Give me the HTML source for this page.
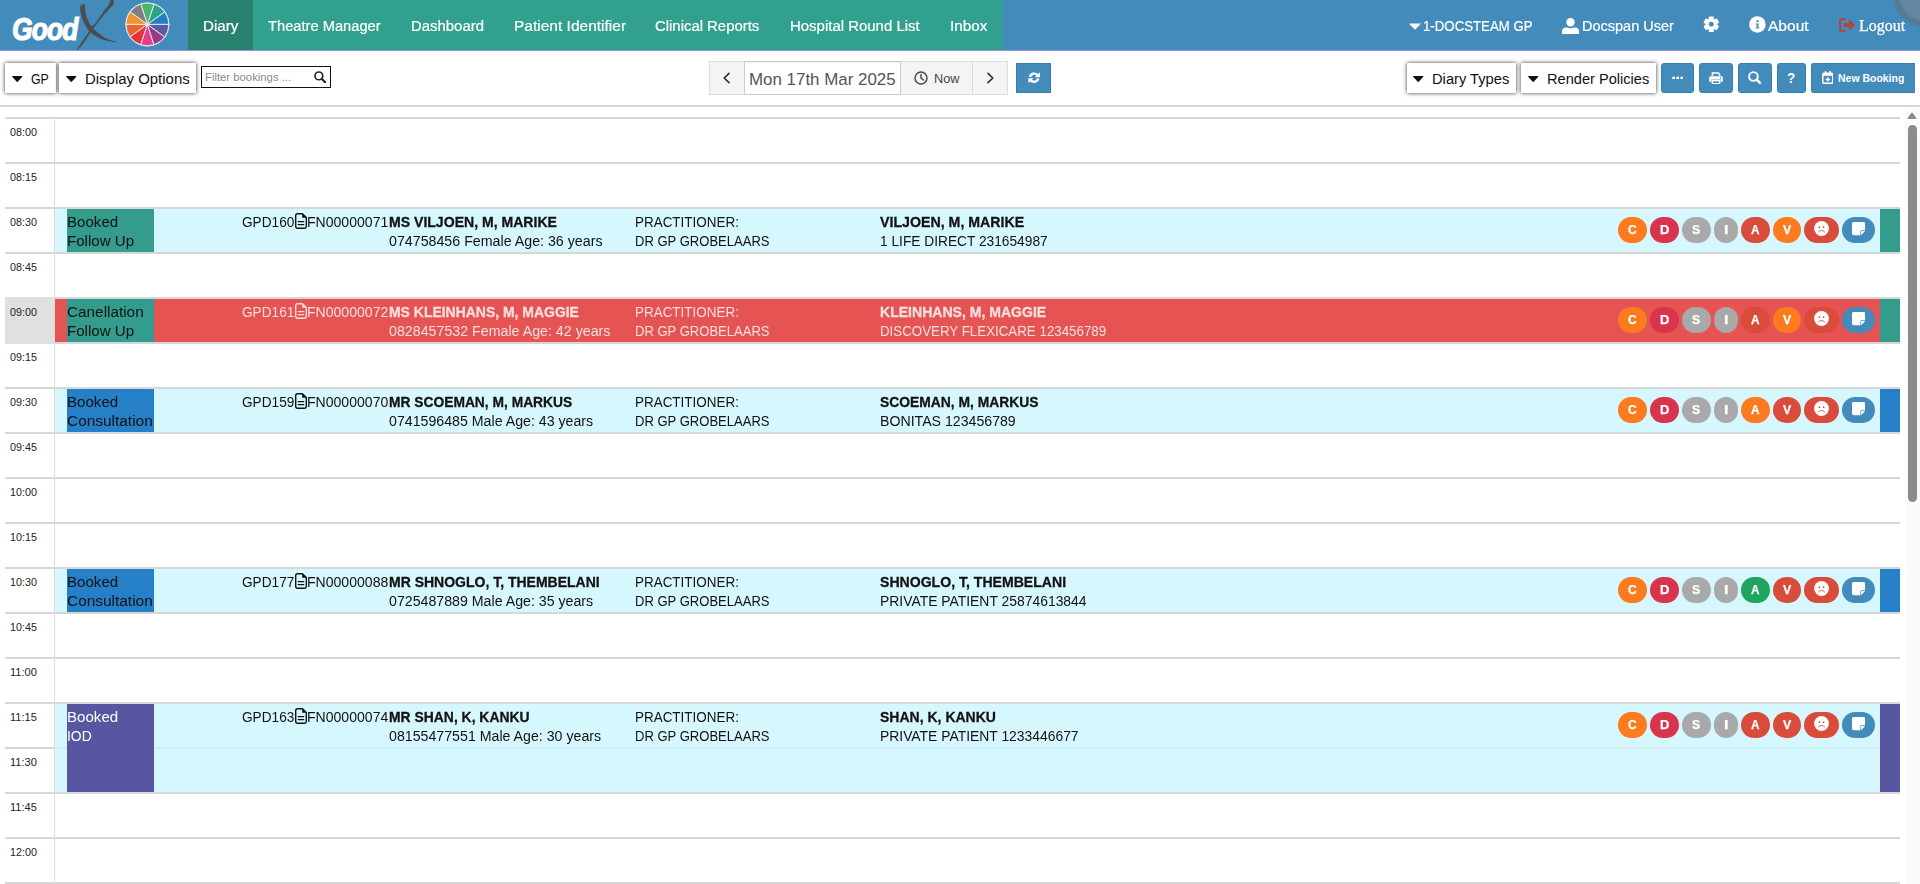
<!DOCTYPE html>
<html lang="en"><head><meta charset="utf-8"><title>GoodX Diary</title>
<style>
html,body{margin:0;padding:0}
body{width:1920px;height:884px;overflow:hidden;position:relative;background:#fff;font-family:"Liberation Sans",sans-serif;color:#222}
#pg{position:absolute;left:0;top:0;width:1920px;height:884px;overflow:hidden}
#pg div,#pg svg,#pg span,#gs span{position:absolute}
#gs{position:absolute;left:0;top:0;width:1920px;height:884px;overflow:hidden;will-change:transform}
#pg span.t,#gs span.t{white-space:pre;line-height:20px;transform-origin:0 0;display:block}
</style></head><body><div id="pg">
<div style="left:0px;top:0px;width:1920px;height:50px;background:#428bba;"></div>
<div style="left:0px;top:50px;width:1920px;height:1px;background:#9d92dc;"></div>
<div style="left:188px;top:0px;width:814px;height:50px;background:#31a08e;"></div>
<div style="left:188px;top:0px;width:65px;height:50px;background:#28806f;"></div>
<div style="left:1891px;top:-41px;width:70px;height:70px;border-radius:50%;background:radial-gradient(circle closest-side,rgba(134,134,134,.5) 0,rgba(134,134,134,.5) 72%,rgba(104,104,104,.52) 84%,rgba(100,100,100,.3) 92%,rgba(100,100,100,0) 100%)"></div>
<svg style="left:70px;top:0" width="60" height="51" viewBox="70 0 60 51"><path d="M80.30 6.50 C80.03 7.70 80.22 9.65 80.60 11.80 C80.98 13.95 81.72 17.05 82.60 19.40 C83.48 21.75 84.77 23.93 85.90 25.90 C87.03 27.87 87.83 29.53 89.40 31.20 C90.97 32.87 93.13 34.53 95.30 35.90 C97.47 37.27 99.95 38.52 102.40 39.40 C104.85 40.28 108.17 40.75 110.00 41.20 C111.83 41.65 112.50 41.93 113.40 42.10 C114.30 42.27 115.05 42.33 115.40 42.20 C115.75 42.07 115.92 41.52 115.50 41.30 C115.08 41.08 114.32 41.32 112.90 40.90 C111.48 40.48 108.95 39.73 107.00 38.80 C105.05 37.87 103.15 36.67 101.20 35.30 C99.25 33.93 96.97 32.17 95.30 30.60 C93.63 29.03 92.48 27.77 91.20 25.90 C89.92 24.03 88.58 21.75 87.60 19.40 C86.62 17.05 85.77 14.27 85.30 11.80 C84.83 9.33 85.32 5.80 84.80 4.60 C84.28 3.40 82.95 4.28 82.20 4.60 C81.45 4.92 80.57 5.30 80.30 6.50Z" fill="#4d4d4f"/><path d="M113.90 -1.00 C114.22 -0.05 113.85 3.17 113.20 4.70 C112.55 6.23 111.42 6.63 110.00 8.20 C108.58 9.77 106.77 11.65 104.70 14.10 C102.63 16.55 99.75 20.15 97.60 22.90 C95.45 25.65 93.65 27.95 91.80 30.60 C89.95 33.25 88.07 36.45 86.50 38.80 C84.93 41.15 83.88 42.87 82.40 44.70 C80.92 46.53 78.53 49.02 77.60 49.80 C76.67 50.58 76.40 50.25 76.80 49.40 C77.20 48.55 78.68 46.67 80.00 44.70 C81.32 42.73 82.93 40.15 84.70 37.60 C86.47 35.05 88.63 32.03 90.60 29.40 C92.57 26.77 94.35 24.73 96.50 21.80 C98.65 18.87 101.55 14.55 103.50 11.80 C105.45 9.05 106.90 7.43 108.20 5.30 C109.50 3.17 110.35 0.05 111.30 -1.00 C112.25 -2.05 113.58 -1.95 113.90 -1.00Z" fill="#4d4d4f"/></svg>
<span style="left:81.4px;top:17.7px;width:20px;height:24px;line-height:24px;font-size:12px;text-align:center;color:#4d4d4f;transform:scaleX(.84);transform-origin:50% 50%">X</span>
<svg style="left:124.29999999999998px;top:1.1000000000000014px" width="46.8" height="46.8" viewBox="-23.4 -23.4 46.8 46.8"><circle r="22.0" fill="#e9eef5"/><path d="M0 0 L21.40 -0.00 A21.4 21.4 0 0 0 17.31 -12.58 Z" fill="#2080c6" stroke="#e9eef5" stroke-width="0.9"/><path d="M0 0 L17.31 -12.58 A21.4 21.4 0 0 0 6.61 -20.35 Z" fill="#2fa08c" stroke="#e9eef5" stroke-width="0.9"/><path d="M0 0 L6.61 -20.35 A21.4 21.4 0 0 0 -6.61 -20.35 Z" fill="#4cb56d" stroke="#e9eef5" stroke-width="0.9"/><path d="M0 0 L-6.61 -20.35 A21.4 21.4 0 0 0 -17.31 -12.58 Z" fill="#7f7f7f" stroke="#e9eef5" stroke-width="0.9"/><path d="M0 0 L-17.31 -12.58 A21.4 21.4 0 0 0 -21.40 -0.00 Z" fill="#ef9232" stroke="#e9eef5" stroke-width="0.9"/><path d="M0 0 L-21.40 -0.00 A21.4 21.4 0 0 0 -17.31 12.58 Z" fill="#ee642c" stroke="#e9eef5" stroke-width="0.9"/><path d="M0 0 L-17.31 12.58 A21.4 21.4 0 0 0 -6.61 20.35 Z" fill="#e1373c" stroke="#e9eef5" stroke-width="0.9"/><path d="M0 0 L-6.61 20.35 A21.4 21.4 0 0 0 6.61 20.35 Z" fill="#e5408f" stroke="#e9eef5" stroke-width="0.9"/><path d="M0 0 L6.61 20.35 A21.4 21.4 0 0 0 17.31 12.58 Z" fill="#9b3a84" stroke="#e9eef5" stroke-width="0.9"/><path d="M0 0 L17.31 12.58 A21.4 21.4 0 0 0 21.40 0.00 Z" fill="#5a5aa6" stroke="#e9eef5" stroke-width="0.9"/><circle r="1.6" fill="#dfeaf2"/></svg>
<svg style="left:1409px;top:23px" width="12" height="7" viewBox="0 0 12 7"><path d="M0.6 0.4 H11.4 Q12 0.6 11.4 1.2 L6.5 6.3 Q6 6.8 5.5 6.3 L0.6 1.2 Q0 .6 .6 .4Z" fill="#fff"/></svg>
<svg style="left:1562px;top:17.5px" width="17" height="16" viewBox="0 0 17 16"><circle cx="8.5" cy="4.2" r="4.2" fill="#fff"/><path d="M0 16 V13.4 Q0 9.6 4 9.4 H5 Q8.5 11 12 9.4 H13 Q17 9.6 17 13.4 V16 Z" fill="#fff"/></svg>
<svg style="left:1702.95px;top:16.3px" width="16.6" height="16.6" viewBox="-8.3 -8.3 16.6 16.6"><path d="M1.85 4.92 L1.81 7.07 L-1.81 7.07 L-1.85 4.92 L-3.33 4.06 L-5.22 5.10 L-7.03 1.97 L-5.19 0.86 L-5.19 -0.86 L-7.03 -1.97 L-5.22 -5.10 L-3.33 -4.06 L-1.85 -4.92 L-1.81 -7.07 L1.81 -7.07 L1.85 -4.92 L3.33 -4.06 L5.22 -5.10 L7.03 -1.97 L5.19 -0.86 L5.19 0.86 L7.03 1.97 L5.22 5.10 L3.33 4.06Z" fill="#fff" stroke="#fff" stroke-width="1.4" stroke-linejoin="round"/><circle r="2.45" fill="#428bba"/></svg>
<svg style="left:1749px;top:16.2px" width="17" height="17" viewBox="0 0 17 17"><circle cx="8.4" cy="8.4" r="8.25" fill="#fff"/><circle cx="8.4" cy="5.2" r="1.15" fill="#428bba"/><path d="M6.9 7.5 H9.4 V11.5 H10.4 V12.6 H6.6 V11.5 H7.6 V8.6 H6.9Z" fill="#428bba"/></svg>
<svg style="left:1838.6px;top:18.2px" width="16" height="14" viewBox="0 0 17 15"><path d="M6 1.1 H3.3 Q1.1 1.1 1.1 3.3 V11.7 Q1.1 13.9 3.3 13.9 H6" fill="none" stroke="#b0443f" stroke-width="2.2" stroke-linecap="round"/><path d="M5.6 5.3 H10.6 V2.2 Q10.8 1.4 11.5 2 L16.6 7 Q17 7.5 16.6 8 L11.5 13 Q10.8 13.6 10.6 12.8 V9.7 H5.6 Q5 9.7 5 9.1 V5.9 Q5 5.3 5.6 5.3Z" fill="#b0443f"/></svg>
<div style="left:5px;top:63px;width:51px;height:30px;background:#fff;box-shadow:0 0 4px rgba(0,0,0,.8);"></div>
<svg style="left:12px;top:76px" width="10.5" height="6.1" viewBox="0 0 11 6" preserveAspectRatio="none"><path d="M0.5 0 H10.5 Q11.2 .2 10.6 .9 L6 5.6 Q5.5 6 5 5.6 L.4 .9 Q-.2 .2 .5 0Z" fill="#111"/></svg>
<div style="left:59px;top:63px;width:137px;height:30px;background:#fff;box-shadow:0 0 4px rgba(0,0,0,.8);"></div>
<svg style="left:66px;top:76px" width="10.5" height="6.1" viewBox="0 0 11 6" preserveAspectRatio="none"><path d="M0.5 0 H10.5 Q11.2 .2 10.6 .9 L6 5.6 Q5.5 6 5 5.6 L.4 .9 Q-.2 .2 .5 0Z" fill="#111"/></svg>
<div style="left:201px;top:66px;width:128px;height:20px;border:1px solid #111;background:#fff"></div>
<svg style="left:313.5px;top:70.5px" width="12" height="12" viewBox="0 0 16 16"><circle cx="6.5" cy="6.5" r="5.2" fill="none" stroke="#222" stroke-width="2.2"/><path d="M10.4 10.4 L14.9 14.9" stroke="#222" stroke-width="2.8000000000000003" stroke-linecap="round"/></svg>
<div style="left:709px;top:61px;width:299px;height:34px;background:#f4f4f4;border:1px solid #ddd;box-sizing:border-box;"></div>
<div style="left:744px;top:61px;width:157px;height:34px;background:#fff;border:1px solid #ccc;box-sizing:border-box;box-shadow:inset 0 1px 1px rgba(0,0,0,.075);"></div>
<div style="left:972px;top:62px;width:1px;height:32px;background:#ddd;"></div>
<svg style="left:722.4px;top:72px" width="9" height="12" viewBox="0 0 9 12"><path d="M7 1.4 L2.2 6 L7 10.6" fill="none" stroke="#333" stroke-width="1.7" stroke-linecap="round" stroke-linejoin="round"/></svg>
<svg style="left:914px;top:70.8px" width="14" height="14" viewBox="0 0 14 14"><circle cx="7" cy="7" r="6" fill="none" stroke="#444" stroke-width="1.4"/><path d="M7 3.4 V7.2 L9.6 9" fill="none" stroke="#444" stroke-width="1.4" stroke-linecap="round"/></svg>
<svg style="left:986px;top:72px" width="9" height="12" viewBox="0 0 9 12"><path d="M2 1.4 L6.8 6 L2 10.6" fill="none" stroke="#333" stroke-width="1.7" stroke-linecap="round" stroke-linejoin="round"/></svg>
<div style="left:1016px;top:63px;width:35px;height:30px;background:#428bba;border:1px solid #367fa9;box-sizing:border-box;"></div>
<svg style="left:1027.8px;top:72px" width="12.2" height="11.3" viewBox="0 0 13 13" preserveAspectRatio="none"><path d="M2.1 5.6 A4.7 4.7 0 0 1 10.2 3.4" fill="none" stroke="#fff" stroke-width="2.7"/><path d="M12.7 .3 V5.9 H7.1Z" fill="#fff"/><path d="M10.9 7.4 A4.7 4.7 0 0 1 2.8 9.6" fill="none" stroke="#fff" stroke-width="2.7"/><path d="M.3 12.7 V7.1 H5.9Z" fill="#fff"/></svg>
<div style="left:1407px;top:63px;width:109px;height:30px;background:#fff;box-shadow:0 0 4px rgba(0,0,0,.8);"></div>
<svg style="left:1413.3px;top:76px" width="10.5" height="6.1" viewBox="0 0 11 6" preserveAspectRatio="none"><path d="M0.5 0 H10.5 Q11.2 .2 10.6 .9 L6 5.6 Q5.5 6 5 5.6 L.4 .9 Q-.2 .2 .5 0Z" fill="#111"/></svg>
<div style="left:1521px;top:63px;width:135px;height:30px;background:#fff;box-shadow:0 0 4px rgba(0,0,0,.8);"></div>
<svg style="left:1528px;top:76px" width="10.5" height="6.1" viewBox="0 0 11 6" preserveAspectRatio="none"><path d="M0.5 0 H10.5 Q11.2 .2 10.6 .9 L6 5.6 Q5.5 6 5 5.6 L.4 .9 Q-.2 .2 .5 0Z" fill="#111"/></svg>
<div style="left:1661px;top:63px;width:33px;height:30px;background:#428bba;border-radius:3px;border:1px solid #367fa9;box-sizing:border-box;"></div>
<div style="left:1699px;top:63px;width:34px;height:30px;background:#428bba;border-radius:3px;border:1px solid #367fa9;box-sizing:border-box;"></div>
<div style="left:1738px;top:63px;width:34px;height:30px;background:#428bba;border-radius:3px;border:1px solid #367fa9;box-sizing:border-box;"></div>
<div style="left:1777px;top:63px;width:29px;height:30px;background:#428bba;border-radius:3px;border:1px solid #367fa9;box-sizing:border-box;"></div>
<div style="left:1811px;top:63px;width:104px;height:30px;background:#428bba;border-radius:3px 0 0 3px;border:1px solid #367fa9;border-right:0;box-sizing:border-box;"></div>
<svg style="left:1671.8px;top:75.5px" width="11.4" height="3.8" viewBox="0 0 12 4"><circle cx="1.7" cy="2" r="1.55" fill="#fff"/><circle cx="6" cy="2" r="1.55" fill="#fff"/><circle cx="10.3" cy="2" r="1.55" fill="#fff"/></svg>
<svg style="left:1709px;top:71.5px" width="14" height="12.5" viewBox="0 0 14 12.5"><path d="M3.4 4 V1 H9.4 L10.6 2.2 V4" fill="none" stroke="#fff" stroke-width="1.5"/><path d="M1.6 4.2 H12.4 Q13.8 4.2 13.8 5.6 V9.2 Q13.8 9.8 13.2 9.8 H11.6 V7.6 H2.4 V9.8 H.8 Q.2 9.8 .2 9.2 V5.6 Q.2 4.2 1.6 4.2Z" fill="#fff"/><rect x="3.4" y="8.6" width="7.2" height="3.2" fill="none" stroke="#fff" stroke-width="1.5"/><circle cx="11.6" cy="6" r=".7" fill="#428bba"/></svg>
<svg style="left:1748px;top:71px" width="13.4" height="13.4" viewBox="0 0 16 16"><circle cx="6.5" cy="6.5" r="5.2" fill="none" stroke="#fff" stroke-width="2.3"/><path d="M10.4 10.4 L14.9 14.9" stroke="#fff" stroke-width="2.9" stroke-linecap="round"/></svg>
<svg style="left:1821.5px;top:70.8px" width="11.5" height="13" viewBox="0 0 11.5 13"><rect x=".8" y="2.2" width="9.9" height="10" rx="1.2" fill="none" stroke="#fff" stroke-width="1.5"/><rect x=".8" y="2.2" width="9.9" height="2.6" fill="#fff"/><rect x="2.6" y="0" width="1.6" height="3" rx=".5" fill="#fff"/><rect x="7.3" y="0" width="1.6" height="3" rx=".5" fill="#fff"/><path d="M5.75 6.2 V10.6 M3.5 8.4 H8" stroke="#fff" stroke-width="1.5"/></svg>
<div style="left:0px;top:105px;width:1920px;height:2px;background:#d7d7d7;"></div>
<div style="left:5px;top:117px;width:1895px;height:2px;background:#d7d7d7;"></div>
<div style="left:5px;top:162px;width:1895px;height:2px;background:#d7d7d7;"></div>
<div style="left:5px;top:207px;width:1895px;height:2px;background:#d7d7d7;"></div>
<div style="left:5px;top:252px;width:1895px;height:2px;background:#d7d7d7;"></div>
<div style="left:5px;top:297px;width:1895px;height:2px;background:#d7d7d7;"></div>
<div style="left:5px;top:342px;width:1895px;height:2px;background:#d7d7d7;"></div>
<div style="left:5px;top:387px;width:1895px;height:2px;background:#d7d7d7;"></div>
<div style="left:5px;top:432px;width:1895px;height:2px;background:#d7d7d7;"></div>
<div style="left:5px;top:477px;width:1895px;height:2px;background:#d7d7d7;"></div>
<div style="left:5px;top:522px;width:1895px;height:2px;background:#d7d7d7;"></div>
<div style="left:5px;top:567px;width:1895px;height:2px;background:#d7d7d7;"></div>
<div style="left:5px;top:612px;width:1895px;height:2px;background:#d7d7d7;"></div>
<div style="left:5px;top:657px;width:1895px;height:2px;background:#d7d7d7;"></div>
<div style="left:5px;top:702px;width:1895px;height:2px;background:#d7d7d7;"></div>
<div style="left:5px;top:747px;width:1895px;height:2px;background:#d7d7d7;"></div>
<div style="left:5px;top:792px;width:1895px;height:2px;background:#d7d7d7;"></div>
<div style="left:5px;top:837px;width:1895px;height:2px;background:#d7d7d7;"></div>
<div style="left:5px;top:882px;width:1895px;height:2px;background:#d7d7d7;"></div>
<div style="left:54px;top:117px;width:1px;height:770px;background:#dcdcdc;"></div>
<div style="left:5px;top:297px;width:49px;height:47px;background:#e0e0e0;"></div>
<div style="left:1905px;top:107px;width:15px;height:777px;background:#fafafa;"></div>
<svg style="left:1907px;top:112px" width="10" height="7" viewBox="0 0 10 7"><path d="M5 .4 Q5.4 .4 5.7 .9 L9.4 6 Q9.7 6.8 8.9 6.9 H1.1 Q.3 6.8 .6 6 L4.3 .9 Q4.6 .4 5 .4Z" fill="#8b8b8b"/></svg>
<div style="left:1908px;top:125px;width:9px;height:377px;background:#8b8b8b;border-radius:4.5px;"></div>
<div style="left:55px;top:209px;width:1845px;height:43px;background:#d7f7ff;"></div>
<div style="left:67px;top:209px;width:87px;height:43px;background:#339c8c;"></div>
<div style="left:1880px;top:209px;width:20px;height:43px;background:#339c8c;"></div>
<svg style="left:294.5px;top:213px" width="12" height="16" viewBox="0 0 12 16"><path d="M2.4 .7 H7.4 L11.3 4.6 V13.6 Q11.3 15.3 9.6 15.3 H2.4 Q.7 15.3 .7 13.6 V2.4 Q.7 .7 2.4 .7Z" fill="none" stroke="#121212" stroke-width="1.4" stroke-linejoin="round"/><path d="M7.2 .6 L11.4 4.8 H7.2Z" fill="#121212"/><path d="M3.2 8.6 H8.7 M3.2 11.6 H8.7" stroke="#121212" stroke-width="1.3" stroke-linecap="round"/></svg>
<div style="left:1618px;top:217px;width:29px;height:26px;border-radius:13px;background:#fd7b1f"></div>
<div style="left:1650px;top:217px;width:29px;height:26px;border-radius:13px;background:#d9344d"></div>
<div style="left:1682px;top:217px;width:29px;height:26px;border-radius:13px;background:#a9a9a9"></div>
<div style="left:1714px;top:217px;width:24px;height:26px;border-radius:13px;background:#a9a9a9"></div>
<div style="left:1741px;top:217px;width:29px;height:26px;border-radius:13px;background:#d94c3c"></div>
<div style="left:1773px;top:217px;width:28px;height:26px;border-radius:13px;background:#fd7b1f"></div>
<div style="left:1804px;top:217px;width:35px;height:26px;border-radius:13px;background:#d94c3c"></div>
<div style="left:1842px;top:217px;width:33px;height:26px;border-radius:13px;background:#428bba"></div>
<svg style="left:1814px;top:221.3px" width="15" height="15" viewBox="0 0 15 15"><circle cx="7.5" cy="7.5" r="7.4" fill="#fff"/><circle cx="5.4" cy="6.2" r=".85" fill="#d94c3c"/><circle cx="9.6" cy="6.2" r=".85" fill="#d94c3c"/><path d="M4.4 11 Q7.5 7.6 10.6 11" fill="none" stroke="#d94c3c" stroke-width=".9" stroke-linecap="round"/></svg>
<svg style="left:1851.9px;top:222.4px" width="13.4" height="13.2" viewBox="0 0 13.4 13.2"><path d="M1.6 0 H11.8 Q13.4 0 13.4 1.6 V8.35 H9.7 Q8.35 8.35 8.35 9.7 V13.2 H1.6 Q0 13.2 0 11.6 V1.6 Q0 0 1.6 0Z" fill="#fff"/><path d="M8.95 13.2 V10 Q8.95 8.95 10 8.95 H13.35Z" fill="#fff"/></svg>
<div style="left:55px;top:299px;width:1845px;height:43px;background:#e55353;"></div>
<div style="left:67px;top:299px;width:87px;height:43px;background:#339c8c;"></div>
<div style="left:1880px;top:299px;width:20px;height:43px;background:#339c8c;"></div>
<svg style="left:294.5px;top:303px" width="12" height="16" viewBox="0 0 12 16"><path d="M2.4 .7 H7.4 L11.3 4.6 V13.6 Q11.3 15.3 9.6 15.3 H2.4 Q.7 15.3 .7 13.6 V2.4 Q.7 .7 2.4 .7Z" fill="none" stroke="#f8dede" stroke-width="1.4" stroke-linejoin="round"/><path d="M7.2 .6 L11.4 4.8 H7.2Z" fill="#f8dede"/><path d="M3.2 8.6 H8.7 M3.2 11.6 H8.7" stroke="#f8dede" stroke-width="1.3" stroke-linecap="round"/></svg>
<div style="left:1618px;top:307px;width:29px;height:26px;border-radius:13px;background:#fd7b1f"></div>
<div style="left:1650px;top:307px;width:29px;height:26px;border-radius:13px;background:#d9344d"></div>
<div style="left:1682px;top:307px;width:29px;height:26px;border-radius:13px;background:#a9a9a9"></div>
<div style="left:1714px;top:307px;width:24px;height:26px;border-radius:13px;background:#a9a9a9"></div>
<div style="left:1741px;top:307px;width:29px;height:26px;border-radius:13px;background:#d94c3c"></div>
<div style="left:1773px;top:307px;width:28px;height:26px;border-radius:13px;background:#fd7b1f"></div>
<div style="left:1804px;top:307px;width:35px;height:26px;border-radius:13px;background:#d94c3c"></div>
<div style="left:1842px;top:307px;width:33px;height:26px;border-radius:13px;background:#428bba"></div>
<svg style="left:1814px;top:311.3px" width="15" height="15" viewBox="0 0 15 15"><circle cx="7.5" cy="7.5" r="7.4" fill="#fff"/><circle cx="5.4" cy="6.2" r=".85" fill="#d94c3c"/><circle cx="9.6" cy="6.2" r=".85" fill="#d94c3c"/><path d="M4.4 11 Q7.5 7.6 10.6 11" fill="none" stroke="#d94c3c" stroke-width=".9" stroke-linecap="round"/></svg>
<svg style="left:1851.9px;top:312.4px" width="13.4" height="13.2" viewBox="0 0 13.4 13.2"><path d="M1.6 0 H11.8 Q13.4 0 13.4 1.6 V8.35 H9.7 Q8.35 8.35 8.35 9.7 V13.2 H1.6 Q0 13.2 0 11.6 V1.6 Q0 0 1.6 0Z" fill="#fff"/><path d="M8.95 13.2 V10 Q8.95 8.95 10 8.95 H13.35Z" fill="#fff"/></svg>
<div style="left:55px;top:389px;width:1845px;height:43px;background:#d7f7ff;"></div>
<div style="left:67px;top:389px;width:87px;height:43px;background:#2580c7;"></div>
<div style="left:1880px;top:389px;width:20px;height:43px;background:#2580c7;"></div>
<svg style="left:294.5px;top:393px" width="12" height="16" viewBox="0 0 12 16"><path d="M2.4 .7 H7.4 L11.3 4.6 V13.6 Q11.3 15.3 9.6 15.3 H2.4 Q.7 15.3 .7 13.6 V2.4 Q.7 .7 2.4 .7Z" fill="none" stroke="#121212" stroke-width="1.4" stroke-linejoin="round"/><path d="M7.2 .6 L11.4 4.8 H7.2Z" fill="#121212"/><path d="M3.2 8.6 H8.7 M3.2 11.6 H8.7" stroke="#121212" stroke-width="1.3" stroke-linecap="round"/></svg>
<div style="left:1618px;top:397px;width:29px;height:26px;border-radius:13px;background:#fd7b1f"></div>
<div style="left:1650px;top:397px;width:29px;height:26px;border-radius:13px;background:#d9344d"></div>
<div style="left:1682px;top:397px;width:29px;height:26px;border-radius:13px;background:#a9a9a9"></div>
<div style="left:1714px;top:397px;width:24px;height:26px;border-radius:13px;background:#a9a9a9"></div>
<div style="left:1741px;top:397px;width:29px;height:26px;border-radius:13px;background:#fd7b1f"></div>
<div style="left:1773px;top:397px;width:28px;height:26px;border-radius:13px;background:#d94c3c"></div>
<div style="left:1804px;top:397px;width:35px;height:26px;border-radius:13px;background:#d94c3c"></div>
<div style="left:1842px;top:397px;width:33px;height:26px;border-radius:13px;background:#428bba"></div>
<svg style="left:1814px;top:401.3px" width="15" height="15" viewBox="0 0 15 15"><circle cx="7.5" cy="7.5" r="7.4" fill="#fff"/><circle cx="5.4" cy="6.2" r=".85" fill="#d94c3c"/><circle cx="9.6" cy="6.2" r=".85" fill="#d94c3c"/><path d="M4.4 11 Q7.5 7.6 10.6 11" fill="none" stroke="#d94c3c" stroke-width=".9" stroke-linecap="round"/></svg>
<svg style="left:1851.9px;top:402.4px" width="13.4" height="13.2" viewBox="0 0 13.4 13.2"><path d="M1.6 0 H11.8 Q13.4 0 13.4 1.6 V8.35 H9.7 Q8.35 8.35 8.35 9.7 V13.2 H1.6 Q0 13.2 0 11.6 V1.6 Q0 0 1.6 0Z" fill="#fff"/><path d="M8.95 13.2 V10 Q8.95 8.95 10 8.95 H13.35Z" fill="#fff"/></svg>
<div style="left:55px;top:569px;width:1845px;height:43px;background:#d7f7ff;"></div>
<div style="left:67px;top:569px;width:87px;height:43px;background:#2580c7;"></div>
<div style="left:1880px;top:569px;width:20px;height:43px;background:#2580c7;"></div>
<svg style="left:294.5px;top:573px" width="12" height="16" viewBox="0 0 12 16"><path d="M2.4 .7 H7.4 L11.3 4.6 V13.6 Q11.3 15.3 9.6 15.3 H2.4 Q.7 15.3 .7 13.6 V2.4 Q.7 .7 2.4 .7Z" fill="none" stroke="#121212" stroke-width="1.4" stroke-linejoin="round"/><path d="M7.2 .6 L11.4 4.8 H7.2Z" fill="#121212"/><path d="M3.2 8.6 H8.7 M3.2 11.6 H8.7" stroke="#121212" stroke-width="1.3" stroke-linecap="round"/></svg>
<div style="left:1618px;top:577px;width:29px;height:26px;border-radius:13px;background:#fd7b1f"></div>
<div style="left:1650px;top:577px;width:29px;height:26px;border-radius:13px;background:#d9344d"></div>
<div style="left:1682px;top:577px;width:29px;height:26px;border-radius:13px;background:#a9a9a9"></div>
<div style="left:1714px;top:577px;width:24px;height:26px;border-radius:13px;background:#a9a9a9"></div>
<div style="left:1741px;top:577px;width:29px;height:26px;border-radius:13px;background:#20a560"></div>
<div style="left:1773px;top:577px;width:28px;height:26px;border-radius:13px;background:#d94c3c"></div>
<div style="left:1804px;top:577px;width:35px;height:26px;border-radius:13px;background:#d94c3c"></div>
<div style="left:1842px;top:577px;width:33px;height:26px;border-radius:13px;background:#428bba"></div>
<svg style="left:1814px;top:581.3px" width="15" height="15" viewBox="0 0 15 15"><circle cx="7.5" cy="7.5" r="7.4" fill="#fff"/><circle cx="5.4" cy="6.2" r=".85" fill="#d94c3c"/><circle cx="9.6" cy="6.2" r=".85" fill="#d94c3c"/><path d="M4.4 11 Q7.5 7.6 10.6 11" fill="none" stroke="#d94c3c" stroke-width=".9" stroke-linecap="round"/></svg>
<svg style="left:1851.9px;top:582.4px" width="13.4" height="13.2" viewBox="0 0 13.4 13.2"><path d="M1.6 0 H11.8 Q13.4 0 13.4 1.6 V8.35 H9.7 Q8.35 8.35 8.35 9.7 V13.2 H1.6 Q0 13.2 0 11.6 V1.6 Q0 0 1.6 0Z" fill="#fff"/><path d="M8.95 13.2 V10 Q8.95 8.95 10 8.95 H13.35Z" fill="#fff"/></svg>
<div style="left:55px;top:704px;width:1845px;height:88px;background:#d7f7ff;"></div>
<div style="left:67px;top:704px;width:87px;height:88px;background:#5856a0;"></div>
<div style="left:1880px;top:704px;width:20px;height:88px;background:#5856a0;"></div>
<svg style="left:294.5px;top:708px" width="12" height="16" viewBox="0 0 12 16"><path d="M2.4 .7 H7.4 L11.3 4.6 V13.6 Q11.3 15.3 9.6 15.3 H2.4 Q.7 15.3 .7 13.6 V2.4 Q.7 .7 2.4 .7Z" fill="none" stroke="#121212" stroke-width="1.4" stroke-linejoin="round"/><path d="M7.2 .6 L11.4 4.8 H7.2Z" fill="#121212"/><path d="M3.2 8.6 H8.7 M3.2 11.6 H8.7" stroke="#121212" stroke-width="1.3" stroke-linecap="round"/></svg>
<div style="left:1618px;top:712px;width:29px;height:26px;border-radius:13px;background:#fd7b1f"></div>
<div style="left:1650px;top:712px;width:29px;height:26px;border-radius:13px;background:#d9344d"></div>
<div style="left:1682px;top:712px;width:29px;height:26px;border-radius:13px;background:#a9a9a9"></div>
<div style="left:1714px;top:712px;width:24px;height:26px;border-radius:13px;background:#a9a9a9"></div>
<div style="left:1741px;top:712px;width:29px;height:26px;border-radius:13px;background:#d94c3c"></div>
<div style="left:1773px;top:712px;width:28px;height:26px;border-radius:13px;background:#d94c3c"></div>
<div style="left:1804px;top:712px;width:35px;height:26px;border-radius:13px;background:#d94c3c"></div>
<div style="left:1842px;top:712px;width:33px;height:26px;border-radius:13px;background:#428bba"></div>
<svg style="left:1814px;top:716.3px" width="15" height="15" viewBox="0 0 15 15"><circle cx="7.5" cy="7.5" r="7.4" fill="#fff"/><circle cx="5.4" cy="6.2" r=".85" fill="#d94c3c"/><circle cx="9.6" cy="6.2" r=".85" fill="#d94c3c"/><path d="M4.4 11 Q7.5 7.6 10.6 11" fill="none" stroke="#d94c3c" stroke-width=".9" stroke-linecap="round"/></svg>
<svg style="left:1851.9px;top:717.4px" width="13.4" height="13.2" viewBox="0 0 13.4 13.2"><path d="M1.6 0 H11.8 Q13.4 0 13.4 1.6 V8.35 H9.7 Q8.35 8.35 8.35 9.7 V13.2 H1.6 Q0 13.2 0 11.6 V1.6 Q0 0 1.6 0Z" fill="#fff"/><path d="M8.95 13.2 V10 Q8.95 8.95 10 8.95 H13.35Z" fill="#fff"/></svg>
<div style="left:154px;top:747px;width:1726px;height:2px;background:#cdeef6;"></div>
<div style="left:55px;top:747px;width:12px;height:2px;background:#cdeef6;"></div>
<span class="t" style="left:12.20px;top:18.85px;font-size:31.6px;font-weight:700;font-style:italic;color:#fff;transform:scaleX(0.8365);-webkit-text-stroke:1.2px #fff;letter-spacing:-1px;">Good</span>
<span class="t" style="left:30.60px;top:68.75px;font-size:15.45px;color:#111;transform:scaleX(0.7994);">GP</span>
<span class="t" style="left:84.80px;top:68.75px;font-size:15.45px;color:#111;transform:scaleX(0.9682);">Display Options</span>
<span class="t" style="left:204.50px;top:67.11px;font-size:11.8px;color:#8a8a8a;transform:scaleX(0.9585);">Filter bookings ...</span>
<span class="t" style="left:749.10px;top:69.02px;font-size:17.27px;color:#555;transform:scaleX(0.9791);">Mon 17th Mar 2025</span>
<span class="t" style="left:934.40px;top:68.75px;font-size:13.43px;color:#444;transform:scaleX(0.9494);">Now</span>
<span class="t" style="left:1432.20px;top:68.85px;font-size:15.45px;color:#111;transform:scaleX(0.9518);">Diary Types</span>
<span class="t" style="left:1546.80px;top:68.85px;font-size:15.45px;color:#111;transform:scaleX(0.9455);">Render Policies</span>
<span class="t" style="left:1787.20px;top:68.43px;font-size:15.2px;font-weight:700;color:#fff;transform:scaleX(0.8835);">?</span>
<span class="t" style="left:1838.00px;top:67.61px;font-size:11.51px;font-weight:700;color:#fff;transform:scaleX(0.9102);">New Booking</span>
<span class="t" style="left:10.30px;top:121.81px;font-size:11.51px;color:#222;transform:scaleX(0.9332);">08:00</span>
<span class="t" style="left:10.30px;top:166.81px;font-size:11.51px;color:#222;transform:scaleX(0.9332);">08:15</span>
<span class="t" style="left:10.30px;top:211.81px;font-size:11.51px;color:#222;transform:scaleX(0.9332);">08:30</span>
<span class="t" style="left:10.30px;top:256.81px;font-size:11.51px;color:#222;transform:scaleX(0.9332);">08:45</span>
<span class="t" style="left:10.30px;top:301.81px;font-size:11.51px;color:#222;transform:scaleX(0.9332);">09:00</span>
<span class="t" style="left:10.30px;top:346.81px;font-size:11.51px;color:#222;transform:scaleX(0.9332);">09:15</span>
<span class="t" style="left:10.30px;top:391.81px;font-size:11.51px;color:#222;transform:scaleX(0.9332);">09:30</span>
<span class="t" style="left:10.30px;top:436.81px;font-size:11.51px;color:#222;transform:scaleX(0.9332);">09:45</span>
<span class="t" style="left:10.30px;top:481.81px;font-size:11.51px;color:#222;transform:scaleX(0.9332);">10:00</span>
<span class="t" style="left:10.30px;top:526.81px;font-size:11.51px;color:#222;transform:scaleX(0.9332);">10:15</span>
<span class="t" style="left:10.30px;top:571.81px;font-size:11.51px;color:#222;transform:scaleX(0.9332);">10:30</span>
<span class="t" style="left:10.30px;top:616.81px;font-size:11.51px;color:#222;transform:scaleX(0.9332);">10:45</span>
<span class="t" style="left:10.30px;top:661.81px;font-size:11.51px;color:#222;transform:scaleX(0.9614);">11:00</span>
<span class="t" style="left:10.30px;top:706.81px;font-size:11.51px;color:#222;transform:scaleX(0.9614);">11:15</span>
<span class="t" style="left:10.30px;top:751.81px;font-size:11.51px;color:#222;transform:scaleX(0.9614);">11:30</span>
<span class="t" style="left:10.30px;top:796.81px;font-size:11.51px;color:#222;transform:scaleX(0.9614);">11:45</span>
<span class="t" style="left:10.30px;top:841.81px;font-size:11.51px;color:#222;transform:scaleX(0.9332);">12:00</span>
</div><div id="gs">
<span class="t" style="left:202.60px;top:15.67px;font-size:15.45px;color:#fff;transform:scaleX(0.9792);-webkit-text-stroke:.2px #fff;">Diary</span>
<span class="t" style="left:268.00px;top:15.67px;font-size:15.45px;color:#fff;transform:scaleX(0.9510);-webkit-text-stroke:.2px #fff;">Theatre Manager</span>
<span class="t" style="left:410.60px;top:15.67px;font-size:15.45px;color:#fff;transform:scaleX(0.9659);-webkit-text-stroke:.2px #fff;">Dashboard</span>
<span class="t" style="left:514.10px;top:15.67px;font-size:15.45px;color:#fff;transform:scaleX(1.0046);-webkit-text-stroke:.2px #fff;">Patient Identifier</span>
<span class="t" style="left:655.30px;top:15.67px;font-size:15.45px;color:#fff;transform:scaleX(0.9644);-webkit-text-stroke:.2px #fff;">Clinical Reports</span>
<span class="t" style="left:789.90px;top:15.67px;font-size:15.45px;color:#fff;transform:scaleX(0.9686);-webkit-text-stroke:.2px #fff;">Hospital Round List</span>
<span class="t" style="left:949.70px;top:15.67px;font-size:15.45px;color:#fff;transform:scaleX(0.9888);-webkit-text-stroke:.2px #fff;">Inbox</span>
<span class="t" style="left:1423.00px;top:15.67px;font-size:15.45px;color:#fff;transform:scaleX(0.8575);-webkit-text-stroke:.2px #fff;">1-DOCSTEAM GP</span>
<span class="t" style="left:1581.70px;top:15.67px;font-size:15.45px;color:#fff;transform:scaleX(0.9396);-webkit-text-stroke:.2px #fff;">Docspan User</span>
<span class="t" style="left:1767.80px;top:15.67px;font-size:15.45px;color:#fff;transform:scaleX(1.0064);-webkit-text-stroke:.2px #fff;">About</span>
<span class="t" style="left:1858.80px;top:16.48px;font-size:16px;color:#fff;transform:scaleX(0.9974);-webkit-text-stroke:.25px #fff;font-family:'Liberation Serif',serif;">Logout</span>
<span class="t" style="left:66.80px;top:211.67px;font-size:15.45px;color:#121212;transform:scaleX(0.9779);">Booked</span>
<span class="t" style="left:66.80px;top:230.67px;font-size:15.45px;color:#121212;transform:scaleX(0.9768);">Follow Up</span>
<span class="t" style="left:242.20px;top:211.67px;font-size:15.45px;color:#121212;transform:scaleX(0.8836);">GPD160</span>
<span class="t" style="left:307.00px;top:211.67px;font-size:15.45px;color:#121212;transform:scaleX(0.9105);">FN00000071</span>
<span class="t" style="left:389.00px;top:211.67px;font-size:15.45px;font-weight:700;color:#121212;transform:scaleX(0.9108);-webkit-text-stroke:.3px;">MS VILJOEN, M, MARIKE</span>
<span class="t" style="left:389.00px;top:230.67px;font-size:15.45px;color:#121212;transform:scaleX(0.9213);">074758456 Female Age: 36 years</span>
<span class="t" style="left:635.10px;top:211.67px;font-size:15.45px;color:#121212;transform:scaleX(0.8712);">PRACTITIONER:</span>
<span class="t" style="left:635.10px;top:230.67px;font-size:15.45px;color:#121212;transform:scaleX(0.8446);">DR GP GROBELAARS</span>
<span class="t" style="left:880.20px;top:211.67px;font-size:15.45px;font-weight:700;color:#121212;transform:scaleX(0.9191);-webkit-text-stroke:.3px;">VILJOEN, M, MARIKE</span>
<span class="t" style="left:879.90px;top:230.67px;font-size:15.45px;color:#121212;transform:scaleX(0.8894);">1 LIFE DIRECT 231654987</span>
<span class="t" style="left:1628.19px;top:219.66px;font-size:12.57px;font-weight:700;color:#fff;transform:scaleX(0.9491);-webkit-text-stroke:.25px #fff;">C</span>
<span class="t" style="left:1659.79px;top:219.66px;font-size:12.57px;font-weight:700;color:#fff;transform:scaleX(1.0366);-webkit-text-stroke:.25px #fff;">D</span>
<span class="t" style="left:1692.39px;top:219.66px;font-size:12.57px;font-weight:700;color:#fff;transform:scaleX(0.9806);-webkit-text-stroke:.25px #fff;">S</span>
<span class="t" style="left:1723.77px;top:219.66px;font-size:12.57px;font-weight:700;color:#fff;transform:scaleX(1.2763);-webkit-text-stroke:.25px #fff;">I</span>
<span class="t" style="left:1751.25px;top:219.66px;font-size:12.57px;font-weight:700;color:#fff;transform:scaleX(0.9355);-webkit-text-stroke:.25px #fff;">A</span>
<span class="t" style="left:1782.89px;top:219.66px;font-size:12.57px;font-weight:700;color:#fff;transform:scaleX(0.9806);-webkit-text-stroke:.25px #fff;">V</span>
<span class="t" style="left:66.80px;top:301.67px;font-size:15.45px;color:#121212;transform:scaleX(0.9925);">Canellation</span>
<span class="t" style="left:66.80px;top:320.67px;font-size:15.45px;color:#121212;transform:scaleX(0.9768);">Follow Up</span>
<span class="t" style="left:242.20px;top:301.67px;font-size:15.45px;color:#f8dede;transform:scaleX(0.8836);">GPD161</span>
<span class="t" style="left:307.00px;top:301.67px;font-size:15.45px;color:#f8dede;transform:scaleX(0.9105);">FN00000072</span>
<span class="t" style="left:389.00px;top:301.67px;font-size:15.45px;font-weight:700;color:#f8dede;transform:scaleX(0.9038);-webkit-text-stroke:.3px;">MS KLEINHANS, M, MAGGIE</span>
<span class="t" style="left:389.00px;top:320.67px;font-size:15.45px;color:#f8dede;transform:scaleX(0.9214);">0828457532 Female Age: 42 years</span>
<span class="t" style="left:635.10px;top:301.67px;font-size:15.45px;color:#f8dede;transform:scaleX(0.8712);">PRACTITIONER:</span>
<span class="t" style="left:635.10px;top:320.67px;font-size:15.45px;color:#f8dede;transform:scaleX(0.8446);">DR GP GROBELAARS</span>
<span class="t" style="left:880.20px;top:301.67px;font-size:15.45px;font-weight:700;color:#f8dede;transform:scaleX(0.9099);-webkit-text-stroke:.3px;">KLEINHANS, M, MAGGIE</span>
<span class="t" style="left:879.90px;top:320.67px;font-size:15.45px;color:#f8dede;transform:scaleX(0.8632);">DISCOVERY FLEXICARE 123456789</span>
<span class="t" style="left:1628.19px;top:309.66px;font-size:12.57px;font-weight:700;color:#fff;transform:scaleX(0.9491);-webkit-text-stroke:.25px #fff;">C</span>
<span class="t" style="left:1659.79px;top:309.66px;font-size:12.57px;font-weight:700;color:#fff;transform:scaleX(1.0366);-webkit-text-stroke:.25px #fff;">D</span>
<span class="t" style="left:1692.39px;top:309.66px;font-size:12.57px;font-weight:700;color:#fff;transform:scaleX(0.9806);-webkit-text-stroke:.25px #fff;">S</span>
<span class="t" style="left:1723.77px;top:309.66px;font-size:12.57px;font-weight:700;color:#fff;transform:scaleX(1.2763);-webkit-text-stroke:.25px #fff;">I</span>
<span class="t" style="left:1751.25px;top:309.66px;font-size:12.57px;font-weight:700;color:#fff;transform:scaleX(0.9355);-webkit-text-stroke:.25px #fff;">A</span>
<span class="t" style="left:1782.89px;top:309.66px;font-size:12.57px;font-weight:700;color:#fff;transform:scaleX(0.9806);-webkit-text-stroke:.25px #fff;">V</span>
<span class="t" style="left:66.80px;top:391.67px;font-size:15.45px;color:#121212;transform:scaleX(0.9779);">Booked</span>
<span class="t" style="left:66.80px;top:410.67px;font-size:15.45px;color:#121212;transform:scaleX(0.9989);">Consultation</span>
<span class="t" style="left:242.20px;top:391.67px;font-size:15.45px;color:#121212;transform:scaleX(0.8836);">GPD159</span>
<span class="t" style="left:307.00px;top:391.67px;font-size:15.45px;color:#121212;transform:scaleX(0.9105);">FN00000070</span>
<span class="t" style="left:389.00px;top:391.67px;font-size:15.45px;font-weight:700;color:#121212;transform:scaleX(0.8938);-webkit-text-stroke:.3px;">MR SCOEMAN, M, MARKUS</span>
<span class="t" style="left:389.00px;top:410.67px;font-size:15.45px;color:#121212;transform:scaleX(0.9184);">0741596485 Male Age: 43 years</span>
<span class="t" style="left:635.10px;top:391.67px;font-size:15.45px;color:#121212;transform:scaleX(0.8712);">PRACTITIONER:</span>
<span class="t" style="left:635.10px;top:410.67px;font-size:15.45px;color:#121212;transform:scaleX(0.8446);">DR GP GROBELAARS</span>
<span class="t" style="left:880.20px;top:391.67px;font-size:15.45px;font-weight:700;color:#121212;transform:scaleX(0.8977);-webkit-text-stroke:.3px;">SCOEMAN, M, MARKUS</span>
<span class="t" style="left:879.90px;top:410.67px;font-size:15.45px;color:#121212;transform:scaleX(0.9159);">BONITAS 123456789</span>
<span class="t" style="left:1628.19px;top:399.66px;font-size:12.57px;font-weight:700;color:#fff;transform:scaleX(0.9491);-webkit-text-stroke:.25px #fff;">C</span>
<span class="t" style="left:1659.79px;top:399.66px;font-size:12.57px;font-weight:700;color:#fff;transform:scaleX(1.0366);-webkit-text-stroke:.25px #fff;">D</span>
<span class="t" style="left:1692.39px;top:399.66px;font-size:12.57px;font-weight:700;color:#fff;transform:scaleX(0.9806);-webkit-text-stroke:.25px #fff;">S</span>
<span class="t" style="left:1723.77px;top:399.66px;font-size:12.57px;font-weight:700;color:#fff;transform:scaleX(1.2763);-webkit-text-stroke:.25px #fff;">I</span>
<span class="t" style="left:1751.25px;top:399.66px;font-size:12.57px;font-weight:700;color:#fff;transform:scaleX(0.9355);-webkit-text-stroke:.25px #fff;">A</span>
<span class="t" style="left:1782.89px;top:399.66px;font-size:12.57px;font-weight:700;color:#fff;transform:scaleX(0.9806);-webkit-text-stroke:.25px #fff;">V</span>
<span class="t" style="left:66.80px;top:571.67px;font-size:15.45px;color:#121212;transform:scaleX(0.9779);">Booked</span>
<span class="t" style="left:66.80px;top:590.67px;font-size:15.45px;color:#121212;transform:scaleX(0.9989);">Consultation</span>
<span class="t" style="left:242.20px;top:571.67px;font-size:15.45px;color:#121212;transform:scaleX(0.8836);">GPD177</span>
<span class="t" style="left:307.00px;top:571.67px;font-size:15.45px;color:#121212;transform:scaleX(0.9105);">FN00000088</span>
<span class="t" style="left:389.00px;top:571.67px;font-size:15.45px;font-weight:700;color:#121212;transform:scaleX(0.9064);-webkit-text-stroke:.3px;">MR SHNOGLO, T, THEMBELANI</span>
<span class="t" style="left:389.00px;top:590.67px;font-size:15.45px;color:#121212;transform:scaleX(0.9184);">0725487889 Male Age: 35 years</span>
<span class="t" style="left:635.10px;top:571.67px;font-size:15.45px;color:#121212;transform:scaleX(0.8712);">PRACTITIONER:</span>
<span class="t" style="left:635.10px;top:590.67px;font-size:15.45px;color:#121212;transform:scaleX(0.8446);">DR GP GROBELAARS</span>
<span class="t" style="left:880.20px;top:571.67px;font-size:15.45px;font-weight:700;color:#121212;transform:scaleX(0.9115);-webkit-text-stroke:.3px;">SHNOGLO, T, THEMBELANI</span>
<span class="t" style="left:879.90px;top:590.67px;font-size:15.45px;color:#121212;transform:scaleX(0.9004);">PRIVATE PATIENT 25874613844</span>
<span class="t" style="left:1628.19px;top:579.66px;font-size:12.57px;font-weight:700;color:#fff;transform:scaleX(0.9491);-webkit-text-stroke:.25px #fff;">C</span>
<span class="t" style="left:1659.79px;top:579.66px;font-size:12.57px;font-weight:700;color:#fff;transform:scaleX(1.0366);-webkit-text-stroke:.25px #fff;">D</span>
<span class="t" style="left:1692.39px;top:579.66px;font-size:12.57px;font-weight:700;color:#fff;transform:scaleX(0.9806);-webkit-text-stroke:.25px #fff;">S</span>
<span class="t" style="left:1723.77px;top:579.66px;font-size:12.57px;font-weight:700;color:#fff;transform:scaleX(1.2763);-webkit-text-stroke:.25px #fff;">I</span>
<span class="t" style="left:1751.25px;top:579.66px;font-size:12.57px;font-weight:700;color:#fff;transform:scaleX(0.9355);-webkit-text-stroke:.25px #fff;">A</span>
<span class="t" style="left:1782.89px;top:579.66px;font-size:12.57px;font-weight:700;color:#fff;transform:scaleX(0.9806);-webkit-text-stroke:.25px #fff;">V</span>
<span class="t" style="left:66.80px;top:706.67px;font-size:15.45px;color:#ffffff;transform:scaleX(0.9779);">Booked</span>
<span class="t" style="left:66.80px;top:725.67px;font-size:15.45px;color:#ffffff;transform:scaleX(0.8993);">IOD</span>
<span class="t" style="left:242.20px;top:706.67px;font-size:15.45px;color:#121212;transform:scaleX(0.8836);">GPD163</span>
<span class="t" style="left:307.00px;top:706.67px;font-size:15.45px;color:#121212;transform:scaleX(0.9105);">FN00000074</span>
<span class="t" style="left:389.00px;top:706.67px;font-size:15.45px;font-weight:700;color:#121212;transform:scaleX(0.9006);-webkit-text-stroke:.3px;">MR SHAN, K, KANKU</span>
<span class="t" style="left:389.00px;top:725.67px;font-size:15.45px;color:#121212;transform:scaleX(0.9188);">08155477551 Male Age: 30 years</span>
<span class="t" style="left:635.10px;top:706.67px;font-size:15.45px;color:#121212;transform:scaleX(0.8712);">PRACTITIONER:</span>
<span class="t" style="left:635.10px;top:725.67px;font-size:15.45px;color:#121212;transform:scaleX(0.8446);">DR GP GROBELAARS</span>
<span class="t" style="left:880.20px;top:706.67px;font-size:15.45px;font-weight:700;color:#121212;transform:scaleX(0.9074);-webkit-text-stroke:.3px;">SHAN, K, KANKU</span>
<span class="t" style="left:879.90px;top:725.67px;font-size:15.45px;color:#121212;transform:scaleX(0.8994);">PRIVATE PATIENT 1233446677</span>
<span class="t" style="left:1628.19px;top:714.66px;font-size:12.57px;font-weight:700;color:#fff;transform:scaleX(0.9491);-webkit-text-stroke:.25px #fff;">C</span>
<span class="t" style="left:1659.79px;top:714.66px;font-size:12.57px;font-weight:700;color:#fff;transform:scaleX(1.0366);-webkit-text-stroke:.25px #fff;">D</span>
<span class="t" style="left:1692.39px;top:714.66px;font-size:12.57px;font-weight:700;color:#fff;transform:scaleX(0.9806);-webkit-text-stroke:.25px #fff;">S</span>
<span class="t" style="left:1723.77px;top:714.66px;font-size:12.57px;font-weight:700;color:#fff;transform:scaleX(1.2763);-webkit-text-stroke:.25px #fff;">I</span>
<span class="t" style="left:1751.25px;top:714.66px;font-size:12.57px;font-weight:700;color:#fff;transform:scaleX(0.9355);-webkit-text-stroke:.25px #fff;">A</span>
<span class="t" style="left:1782.89px;top:714.66px;font-size:12.57px;font-weight:700;color:#fff;transform:scaleX(0.9806);-webkit-text-stroke:.25px #fff;">V</span>
</div></body></html>
